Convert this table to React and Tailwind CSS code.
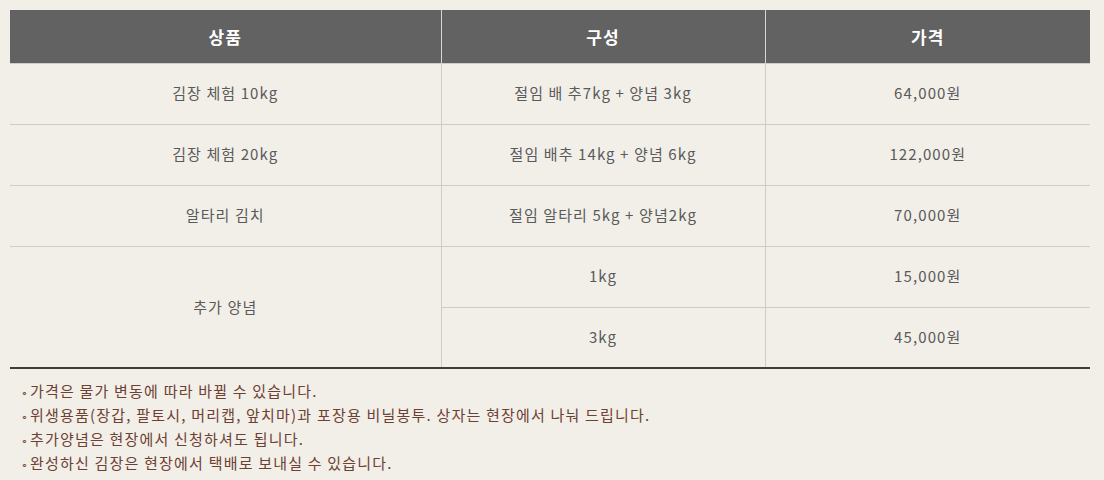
import React from "react";

const rows = [
  { name: "김장 체험 10kg", items: [["절임 배 추7kg + 양념 3kg", "64,000원"]] },
  { name: "김장 체험 20kg", items: [["절임 배추 14kg + 양념 6kg", "122,000원"]] },
  { name: "알타리 김치", items: [["절임 알타리 5kg + 양념2kg", "70,000원"]] },
  {
    name: "추가 양념",
    items: [
      ["1kg", "15,000원"],
      ["3kg", "45,000원"],
    ],
  },
];

const notes = [
  "가격은 물가 변동에 따라 바뀔 수 있습니다.",
  "위생용품(장갑, 팔토시, 머리캡, 앞치마)과 포장용 비닐봉투. 상자는 현장에서 나눠 드립니다.",
  "추가양념은 현장에서 신청하셔도 됩니다.",
  "완성하신 김장은 현장에서 택배로 보내실 수 있습니다.",
];

export default function App() {
  return (
    <div
      className="w-[1104px] h-[480px] bg-[#f2efe9] px-[10px] pt-[10px] overflow-hidden"
      style={{ fontFamily: '"Noto Sans CJK KR", "Noto Sans", sans-serif' }}
    >
      <table className="w-[1080px] border-collapse table-fixed text-[15px] tracking-[1.1px] text-[#5a5a5a]">
        <colgroup>
          <col className="w-[431px]" />
          <col className="w-[324px]" />
          <col className="w-[325px]" />
        </colgroup>
        <thead>
          <tr className="bg-[#626262] text-white h-[53px]">
            <th className="font-bold text-[17px] border-r border-[#d6d6d6]">상품</th>
            <th className="font-bold text-[17px] border-r border-[#d6d6d6]">구성</th>
            <th className="font-bold text-[17px]">가격</th>
          </tr>
        </thead>
        <tbody className="border-b-2 border-[#3f3c38]">
          {rows.map((row) =>
            row.items.map((item, i) => (
              <tr key={row.name + i} className="h-[61px] border-t border-[#cfccc7]">
                {i === 0 && (
                  <td
                    rowSpan={row.items.length}
                    className="text-center border-r border-[#cfccc7]"
                  >
                    {row.name}
                  </td>
                )}
                <td className="text-center border-r border-[#cfccc7]">{item[0]}</td>
                <td className="text-center">{item[1]}</td>
              </tr>
            ))
          )}
        </tbody>
      </table>
      <ul className="pt-[10px] pl-[11px] text-[15px] tracking-[1.2px] text-[#6e3f33] leading-[24px]">
        {notes.map((n) => (
          <li key={n} className="flex items-center">
            <span className="text-[11px] mr-[2px] tracking-normal translate-y-[1px]">∘</span>
            {n}
          </li>
        ))}
      </ul>
    </div>
  );
}
